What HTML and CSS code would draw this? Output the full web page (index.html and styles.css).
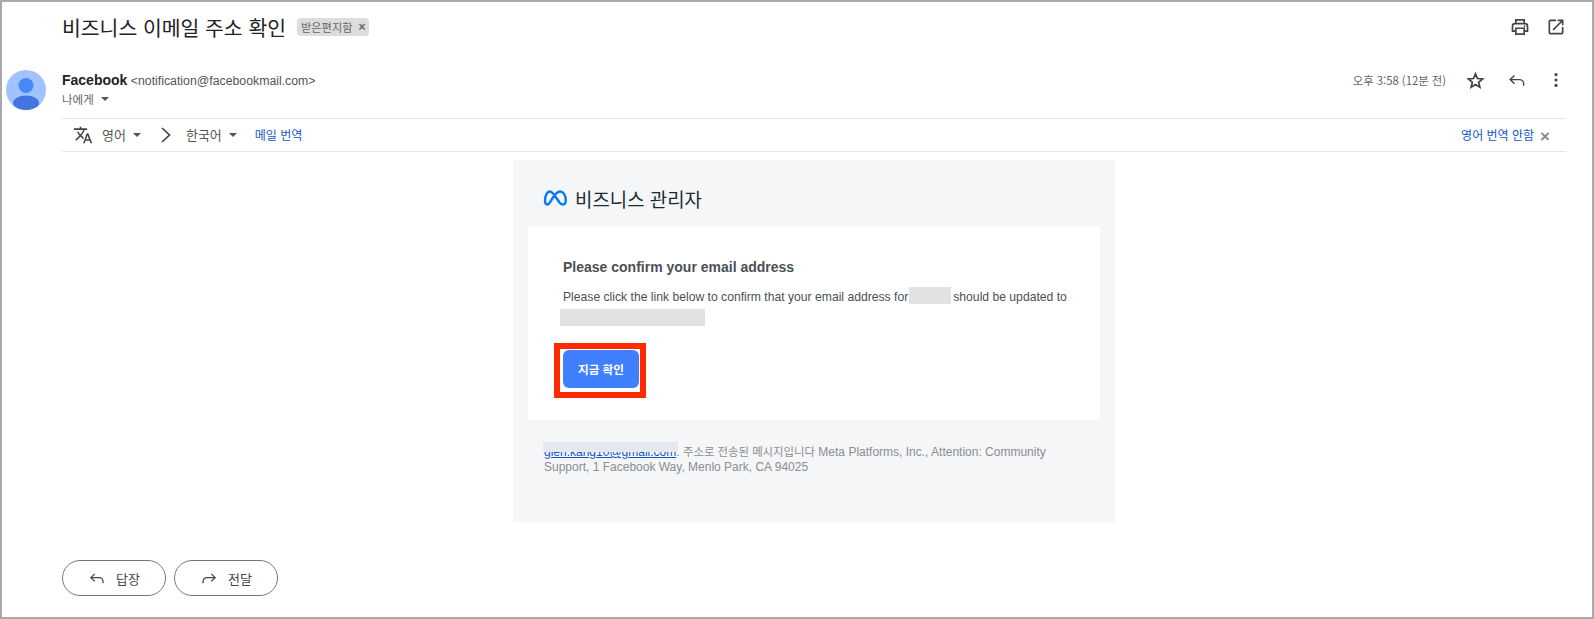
FILE: index.html
```html
<!DOCTYPE html>
<html lang="ko">
<head>
<meta charset="utf-8">
<title>비즈니스 이메일 주소 확인</title>
<link rel="stylesheet" href="styles.css">
</head>
<body>
<div class="frame">
  <header class="subject">
    <h1 class="subject-title">비즈니스 이메일 주소 확인</h1>
    <span class="chip">받은편지함<span class="chip-x">×</span></span>
    <div class="subject-icons">
      <svg class="icon" viewBox="0 0 24 24"><g fill="none" stroke="#444" stroke-width="2"><path d="M7 8V3.500h10V8"/><path d="M7 17H3v-6a3 3 0 0 1 3-3h12a3 3 0 0 1 3 3v6h-4"/><path d="M7 13.500h10v7H7z"/></g><circle cx="17.500" cy="11" r="1" fill="#444"/></svg>
      <svg class="icon" viewBox="0 0 24 24"><path d="M19 19H5V5h7V3H5a2 2 0 0 0-2 2v14a2 2 0 0 0 2 2h14a2 2 0 0 0 2-2v-7h-2v7zM14 3v2h3.600l-9.800 9.800 1.400 1.400L19 6.400V10h2V3h-7z" fill="#444"/></svg>
    </div>
  </header>

  <section class="sender">
    <svg class="avatar" viewBox="0 0 40 40">
      <defs><clipPath id="av"><circle cx="20" cy="20" r="20"/></clipPath></defs>
      <circle cx="20" cy="20" r="20" fill="#a0c3ff"/>
      <g clip-path="url(#av)">
        <circle cx="20" cy="15.500" r="7.500" fill="#4285f4" opacity=".95"/>
        <ellipse cx="20" cy="33" rx="13" ry="7.500" fill="#4374e0"/>
      </g>
    </svg>
    <div class="sender-main">
      <div class="sender-top">
        <div class="sender-name"><b>Facebook</b> <span class="sender-mail">&lt;notification@facebookmail.com&gt;</span></div>
        <div class="sender-actions">
          <span class="time">오후 3:58 (12분 전)</span>
          <svg class="icon star" viewBox="0 0 24 24"><path d="M12 3.600l2.500 5.900 6.400.5-4.900 4.200 1.500 6.200L12 17.100l-5.500 3.300L8 14.200 3.100 10l6.400-.5z" fill="none" stroke="#444" stroke-width="2.200"/></svg>
          <svg class="icon reply" viewBox="0 0 24 24"><path d="M9 6.500L3.800 11.500 9 16.500M4.200 11.500H15a5 5 0 0 1 5 5V19" fill="none" stroke="#444" stroke-width="1.700"/></svg>
          <svg class="icon more" viewBox="0 0 24 24"><circle cx="12" cy="5.500" r="1.900" fill="#444"/><circle cx="12" cy="12" r="1.900" fill="#444"/><circle cx="12" cy="18.500" r="1.900" fill="#444"/></svg>
        </div>
      </div>
      <div class="to">나에게<span class="caret to-caret"></span></div>
    </div>
  </section>

  <section class="translate">
    <svg class="icon tr-icon" viewBox="0 0 24 24"><path d="M12.900 15.100l-2.600-2.500a17.600 17.600 0 0 0 3.700-6.600H17V4h-7V2H8v2H1v2h11.200a15.700 15.700 0 0 1-3.200 5.400A15.600 15.600 0 0 1 6.700 8h-2c.7 1.600 1.700 3.200 3 4.600l-5.100 5L4 19l5-5 3.100 3.100.8-2zM18.500 10h-2L12 22h2l1.100-3h4.800l1.100 3h2l-4.500-12zm-2.600 7l1.600-4.300 1.600 4.300h-3.200z" fill="#444"/></svg>
    <span class="lang">영어</span><span class="caret"></span>
    <svg class="chev" viewBox="0 0 12 18"><path d="M2 2l7.500 7L2 16" fill="none" stroke="#444" stroke-width="1.700"/></svg>
    <span class="lang">한국어</span><span class="caret"></span>
    <a class="link tr-link">메일 번역</a>
    <a class="link tr-off">영어 번역 안함</a>
    <span class="tr-x">×</span>
  </section>

  <main class="card">
    <div class="brand">
      <svg class="meta" viewBox="0 0 24 16">
        <path d="M2 10.500C2 6 4 1.500 7 1.500c3 0 7 7.500 9.500 11 1.500 2 2.500 2 3.500 2 2 0 2.800-2 2.800-4.500 0-4.500-2.300-8.500-5.800-8.500-3 0-5.500 3.500-8 7.500-2 3.500-3 5.500-4.500 5.500C2.800 14.500 2 13 2 10.500z" fill="none" stroke="#0a78f5" stroke-width="2.400"/>
      </svg>
      <span>비즈니스 관리자</span>
    </div>
    <div class="panel">
      <h2 class="panel-title">Please confirm your email address</h2>
      <p class="panel-text">Please click the link below to confirm that your email address for<span class="blur blur-a"></span>should be updated to</p>
      <div class="blur blur-b"></div>
      <div class="highlight"><a class="cta">지금 확인</a></div>
    </div>
    <p class="foot"><span class="foot-mail"><a class="foot-link">glen.kang10@gmail.com</a><span class="foot-mask"></span></span>. <span class="foot-ko">주소로 전송된 메시지입니다</span> Meta Platforms, Inc., Attention: Community Support, 1 Facebook Way, Menlo Park, CA 94025</p>
  </main>

  <footer class="actions">
    <a class="pill">
      <svg class="pill-icon" viewBox="0 0 24 24"><path d="M9 6.500L3.800 11.500 9 16.500M4.200 11.500H15a5 5 0 0 1 5 5V19" fill="none" stroke="#444" stroke-width="1.700"/></svg>답장
    </a>
    <a class="pill">
      <svg class="pill-icon" viewBox="0 0 24 24"><path d="M15 6.500l5.200 5-5.200 5M19.800 11.500H9a5 5 0 0 0-5 5V19" fill="none" stroke="#444" stroke-width="1.700"/></svg>전달
    </a>
  </footer>
</div>
</body>
</html>
```

FILE: styles.css
```css
* { box-sizing: border-box; }
html, body { margin: 0; padding: 0; background: #fff; }
body {
  width: 1594px;
  height: 619px;
  overflow: hidden;
  font-family: "Liberation Sans", "Noto Sans CJK KR", sans-serif;
  color: #222;
}
.frame {
  width: 1594px;
  height: 619px;
  border: 2px solid #a9a9a9;
  background: #fff;
  display: flex;
  flex-direction: column;
}
.icon { display: block; flex: none; }

.subject {
  display: flex;
  align-items: center;
  height: 50px;
  padding: 0 26px 0 60px;
}
.subject-title {
  margin: 0;
  font-family: "Noto Sans CJK KR", sans-serif;
  font-size: 20.450px;
  font-weight: 400;
  line-height: 50px;
  color: #222;
}
.chip {
  margin-left: 11px;
  height: 18px;
  padding: 0 4px;
  border-radius: 4px;
  background: #dddddd;
  color: #666;
  font-family: "Noto Sans CJK KR", sans-serif;
  font-size: 11.200px;
  line-height: 18px;
  display: inline-flex;
  align-items: center;
}
.chip-x { margin-left: 6px; font-family: "Liberation Sans", sans-serif; font-size: 12px; font-weight: 700; color: #666; }
.subject-icons {
  margin-left: auto;
  display: flex;
  gap: 16px;
}
.subject-icons .icon { width: 20px; height: 20px; }

.sender {
  display: flex;
  height: 66px;
  padding: 18px 26px 0 4px;
}
.avatar { width: 40px; height: 40px; flex: none; }
.sender-main { margin-left: 16px; flex: 1; }
.sender-top {
  display: flex;
  justify-content: space-between;
  align-items: center;
  height: 20px;
}
.sender-name { font-size: 12.300px; color: #555; line-height: 20px; }
.sender-name b { font-size: 14px; color: #222; }
.sender-actions { display: flex; align-items: center; }
.time {
  font-family: "Noto Sans CJK KR", sans-serif;
  font-size: 11.300px;
  color: #5f6368;
  margin-right: 20px;
}
.star { width: 19px; height: 19px; }
.reply { width: 20px; height: 20px; margin-left: 22px; }
.more { width: 20px; height: 20px; margin-left: 19px; }
.to {
  margin-top: 0;
  font-family: "Noto Sans CJK KR", sans-serif;
  font-size: 11.500px;
  line-height: 18px;
  color: #5f6368;
  display: flex;
  align-items: center;
}
.caret {
  display: inline-block;
  width: 0;
  height: 0;
  border-left: 4px solid transparent;
  border-right: 4px solid transparent;
  border-top: 4px solid #555;
  margin-left: 7px;
}

.translate {
  margin: 0 26px 0 60px;
  height: 34px;
  border-top: 1px solid #e6e6e6;
  border-bottom: 1px solid #e6e6e6;
  display: flex;
  align-items: center;
  font-family: "Noto Sans CJK KR", sans-serif;
  font-size: 13px;
  color: #555;
}
.tr-icon { width: 20px; height: 20px; margin-left: 11px; }
.lang { margin-left: 9px; padding-bottom: 1px; }
.chev { width: 12px; height: 18px; margin-left: 19px; margin-right: 2px; }
.chev + .lang { margin-left: 12px; }
.link { color: #1155cc; font-size: 12px; padding-bottom: 2px; }
.tr-link { margin-left: 18px; }
.tr-off { margin-left: auto; }
.tr-x { margin: 2px 16px 0 6px; font-family: "Liberation Sans", sans-serif; font-size: 17px; font-weight: 700; color: #888; line-height: 1; }

.card {
  width: 602px;
  height: 362px;
  margin: 8px 0 0 511px;
  background: #f5f6f8;
  padding: 0 15px;
  flex: none;
}
.brand {
  height: 66px;
  padding: 10px 0 0 15px;
  display: flex;
  align-items: center;
  font-family: "Noto Sans CJK KR", sans-serif;
  font-size: 18.900px;
  color: #1c2b33;
}
.meta { width: 24px; height: 16px; margin-right: 8px; }
.panel {
  height: 194px;
  background: #fff;
  padding: 31px 30px 0 35px;
}
.panel-title {
  margin: 0;
  font-size: 14px;
  font-weight: 700;
  line-height: 20px;
  color: #4b4f56;
}
.panel-text {
  margin: 10px 0 0;
  font-size: 12.170px;
  line-height: 20px;
  color: #4b4f56;
}
.blur {
  background: #e2e2e2;
  display: inline-block;
}
.blur-a { width: 42px; height: 17px; vertical-align: -3px; margin: 0 2px 0 1px; }
.blur-b { display: block; width: 145px; height: 17px; margin: 2px 0 0 -3px; }
.highlight {
  width: 92px;
  height: 55px;
  margin: 17px 0 0 -9px;
  border: 6px solid #ff2a00;
  padding: 1px 3px;
}
.cta {
  display: block;
  width: 76px;
  height: 38px;
  background: #4080ff;
  border-radius: 6px;
  color: #fff;
  font-family: "Noto Sans CJK KR", sans-serif;
  font-size: 11.600px;
  font-weight: 700;
  line-height: 38px;
  text-align: center;
}
.foot {
  margin: 25px 0 0 2px;
  padding-left: 14px;
  width: 520px;
  font-size: 12px;
  line-height: 14.500px;
  color: #8a8d91;
}
.foot-ko { font-size: 11.400px; }
.foot-mail { position: relative; display: inline-block; }
.foot-link { color: #1155cc; text-decoration: underline; }
.foot-mask {
  position: absolute;
  left: -1px;
  right: -2px;
  top: -3px;
  height: 10px;
  background: #e6e8ef;
}

.actions {
  display: flex;
  gap: 8px;
  margin: 38px 0 0 60px;
}
.pill {
  width: 104px;
  height: 36px;
  border: 1px solid #777;
  border-radius: 18px;
  display: flex;
  align-items: center;
  justify-content: center;
  font-family: "Noto Sans CJK KR", sans-serif;
  font-size: 13px;
  color: #444;
}
.pill-icon { width: 18px; height: 18px; margin-right: 10px; }
```
